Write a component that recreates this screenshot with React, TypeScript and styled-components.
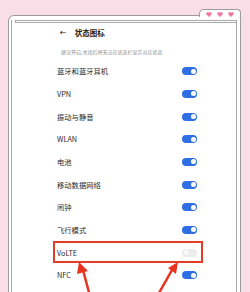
import styled, { createGlobalStyle } from "styled-components";

const GlobalStyle = createGlobalStyle`
  html, body {
    margin: 0;
    padding: 0;
    background: #f9dde7;
  }
  * {
    box-sizing: border-box;
  }
`;

const Screen = styled.div`
  position: relative;
  width: 250px;
  height: 292px;
  overflow: hidden;
  background: #f9dde7;
  padding: 15px 9px 0 8px;
  font-family: "Noto Sans CJK SC", "Noto Sans", sans-serif;
`;

const Frame = styled.div`
  position: relative;
  height: 100%;
  background: #fff;
  border: 1px solid #9c9c9c;
  border-bottom: none;
  border-radius: 6px 4px 0 0;
  padding: 4px 3px 0 2px;
`;

const Tab = styled.div`
  position: absolute;
  top: -7px;
  right: -1px;
  width: 42px;
  height: 8px;
  background: #fff;
  border: 1px solid #9c9c9c;
  border-bottom: none;
  border-radius: 5px 4px 0 0;
  display: flex;
  align-items: center;
  justify-content: center;
  gap: 5px;
  padding-top: 1px;
`;

const Heart = styled.svg`
  width: 6px;
  height: 5px;
  display: block;
`;

const Inner = styled.div`
  height: 100%;
  border-left: 1px solid #a8a8a8;
  border-right: 1px solid #a8a8a8;
  display: flex;
  flex-direction: column;
`;

const TopStrip = styled.div`
  height: 3px;
  margin-left: 3px;
  border: 1px solid #a8a8a8;
  border-right: none;
`;

const Content = styled.div`
  padding: 0 39px 0 45px;
  display: flex;
  flex-direction: column;
`;

const Header = styled.div`
  display: flex;
  align-items: center;
  height: 14px;
  margin-top: 3px;
  padding-left: 3px;
  gap: 8px;
  color: #222;
`;

const Back = styled.span`
  font-size: 8px;
  line-height: 14px;
  font-family: "DejaVu Sans", sans-serif;
`;

const Title = styled.h1`
  margin: 0;
  font-size: 7.5px;
  font-weight: 700;
  line-height: 14px;
`;

const Hint = styled.p`
  margin: 8px 0 4px 4px;
  font-size: 5px;
  line-height: 8px;
  color: #8f8f8f;
  white-space: nowrap;
`;

const Row = styled.div<{ $marked?: boolean }>`
  position: relative;
  height: 22.67px;
  display: flex;
  align-items: center;
  justify-content: space-between;

  ${(p) =>
    p.$marked &&
    `
    &::after {
      content: "";
      position: absolute;
      top: 0;
      bottom: 1px;
      left: -4px;
      right: -6px;
      border: 2px solid #e63b26;
    }
  `}
`;

const Label = styled.span`
  font-size: 7.3px;
  color: #2a2a2a;
  line-height: 10px;
`;

const Toggle = styled.span<{ $on: boolean }>`
  position: relative;
  width: 15px;
  height: 8px;
  border-radius: 4px;
  background: ${(p) => (p.$on ? "#2f6fe3" : "#ececec")};

  &::before {
    content: "";
    position: absolute;
    top: 1.5px;
    ${(p) => (p.$on ? "right: 1.5px;" : "left: 1.5px;")}
    width: 5px;
    height: 5px;
    border-radius: 50%;
    background: ${(p) => (p.$on ? "#fff" : "#f8f8f8")};
  }
`;

const Arrows = styled.svg`
  position: absolute;
  left: 0;
  top: 0;
  width: 250px;
  height: 292px;
  pointer-events: none;
`;

const items = [
  { label: "蓝牙和蓝牙耳机", on: true },
  { label: "VPN", on: true },
  { label: "振动与静音", on: true },
  { label: "WLAN", on: true },
  { label: "电池", on: true },
  { label: "移动数据网络", on: true },
  { label: "闹钟", on: true },
  { label: "飞行模式", on: true },
  { label: "VoLTE", on: false, marked: true },
  { label: "NFC", on: true },
];

const HeartIcon = () => (
  <Heart viewBox="0 0 12 10">
    <path
      d="M6 10 L1 5 A2.8 2.8 0 0 1 6 1.5 A2.8 2.8 0 0 1 11 5 Z"
      fill="#f27aa2"
    />
  </Heart>
);

const App = () => {
  return (
    <>
      <GlobalStyle />
      <Screen>
        <Frame>
          <Tab>
            <HeartIcon />
            <HeartIcon />
            <HeartIcon />
          </Tab>
          <Inner>
            <TopStrip />
            <Content>
              <Header>
                <Back>←</Back>
                <Title>状态图标</Title>
              </Header>
              <Hint>建议开启,关闭后将无法在状态栏显示对应状态</Hint>
              {items.map((item) => (
                <Row key={item.label} $marked={item.marked}>
                  <Label>{item.label}</Label>
                  <Toggle $on={item.on} />
                </Row>
              ))}
            </Content>
          </Inner>
        </Frame>
        <Arrows viewBox="0 0 250 292">
          <line x1="91" y1="300" x2="83" y2="270" stroke="#e8331f" strokeWidth="2.5" />
          <polygon points="79,262 77,274 88,271" fill="#e8331f" />
          <line x1="155" y1="300" x2="172" y2="270" stroke="#e8331f" strokeWidth="2.5" />
          <polygon points="178,262 168,268 176,274" fill="#e8331f" />
        </Arrows>
      </Screen>
    </>
  );
};

export default App;
